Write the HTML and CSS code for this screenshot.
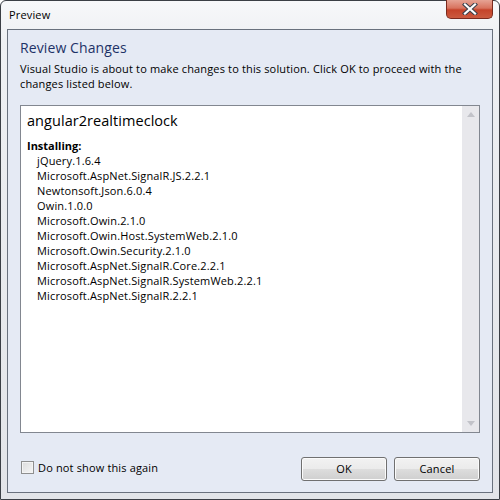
FILE: index.html
```html
<!DOCTYPE html>
<html>
<head>
<meta charset="utf-8">
<link rel="stylesheet" href="styles.css">
</head>
<body>
<div class="window">
  <div class="titlebar">
    <span class="title">Preview</span>
    <div class="close">
      <svg width="20" height="12" viewBox="0 0 20 12">
        <path d="M5 1.5 L15 10.5 M15 1.5 L5 10.5" stroke="#3a3f4a" stroke-width="4.2" stroke-linecap="square"/>
        <path d="M5 1.5 L15 10.5 M15 1.5 L5 10.5" stroke="#ffffff" stroke-width="2.2" stroke-linecap="square"/>
      </svg>
    </div>
  </div>
  <div class="client">
    <div class="heading">Review Changes</div>
    <div class="desc">Visual Studio is about to make changes to this solution. Click OK to proceed with the changes listed below.</div>
    <div class="box">
      <div class="box-content">
        <div class="project">angular2realtimeclock</div>
        <div class="section">Installing:</div>
        <ul class="packages">
          <li>jQuery.1.6.4</li>
          <li>Microsoft.AspNet.SignalR.JS.2.2.1</li>
          <li>Newtonsoft.Json.6.0.4</li>
          <li>Owin.1.0.0</li>
          <li>Microsoft.Owin.2.1.0</li>
          <li>Microsoft.Owin.Host.SystemWeb.2.1.0</li>
          <li>Microsoft.Owin.Security.2.1.0</li>
          <li>Microsoft.AspNet.SignalR.Core.2.2.1</li>
          <li>Microsoft.AspNet.SignalR.SystemWeb.2.2.1</li>
          <li>Microsoft.AspNet.SignalR.2.2.1</li>
        </ul>
      </div>
      <div class="scrollbar">
        <span class="arrow up"></span>
        <span class="arrow down"></span>
      </div>
    </div>
    <div class="footer">
      <label class="check"><span class="checkbox"></span>Do not show this again</label>
      <div class="buttons">
        <div class="btn">OK</div>
        <div class="btn">Cancel</div>
      </div>
    </div>
  </div>
</div>
</body>
</html>
```
FILE: styles.css
```css
html, body {
  margin: 0;
  padding: 0;
  width: 500px;
  height: 500px;
  overflow: hidden;
}
body {
  font-family: "Open Sans", "Noto Sans", sans-serif;
  font-size: 11px;
  letter-spacing: 0.15px;
  color: #000;
}
.window {
  box-sizing: border-box;
  width: 500px;
  height: 500px;
  border: 1px solid #3b3f45;
  border-radius: 6px 6px 0 0;
  background: linear-gradient(to bottom, #f7f8fa 0px, #eef0f3 40px, #e2e4e8 100%);
  display: flex;
  flex-direction: column;
}
.titlebar {
  height: 28px;
  display: flex;
  justify-content: space-between;
  align-items: flex-start;
}
.title {
  margin: 5px 0 0 8px;
  line-height: 18px;
  color: #000;
}
.close {
  width: 45px;
  height: 18px;
  margin-right: 6px;
  margin-top: -1px;
  border: 1px solid #7a2a1e;
  border-top: none;
  border-radius: 0 0 5px 5px;
  background: linear-gradient(to bottom, #e6a394 0%, #d8735e 45%, #c5432a 55%, #cb5a3f 100%);
  display: flex;
  align-items: center;
  justify-content: center;
}
.close svg { display: block; }
.client {
  flex: 1;
  margin: 0 6px 6px 6px;
  border: 1px solid #69717d;
  background: #e5eaf4;
  padding: 0 12px 11px 12px;
  display: flex;
  flex-direction: column;
}
.heading {
  font-size: 14px;
  letter-spacing: 0.1px;
  line-height: 20px;
  margin-top: 8px;
  color: #1e3267;
}
.desc {
  margin-top: 3px;
  line-height: 15px;
  color: #000;
}
.box {
  margin-top: 14px;
  height: 328px;
  box-sizing: border-box;
  border: 1px solid #828790;
  background: #fff;
  display: flex;
}
.box-content {
  flex: 1;
  padding: 4px 6px;
}
.project {
  font-size: 14.5px;
  letter-spacing: 0.05px;
  line-height: 22px;
  color: #000;
}
.section {
  margin-top: 6px;
  font-weight: bold;
  letter-spacing: 0;
  line-height: 15px;
}
.packages {
  list-style: none;
  margin: 0;
  padding: 0 0 0 10px;
}
.packages li {
  line-height: 15px;
}
.scrollbar {
  width: 17px;
  background: #e8e8ec;
  display: flex;
  flex-direction: column;
  justify-content: space-between;
  align-items: center;
  padding: 6px 0 6px 0;
}
.arrow {
  width: 0;
  height: 0;
  border-left: 4.5px solid transparent;
  border-right: 4.5px solid transparent;
}
.arrow.up { border-bottom: 5px solid #c2c3c9; }
.arrow.down { border-top: 5px solid #c2c3c9; }
.footer {
  margin-top: 24px;
  display: flex;
  justify-content: space-between;
  align-items: center;
}
.check {
  display: flex;
  align-items: center;
  gap: 4px;
  margin-left: 1px;
  margin-bottom: 3px;
}
.checkbox {
  width: 11px;
  height: 11px;
  border: 1px solid #8f8f8f;
  background: linear-gradient(135deg, #dcdcdc, #f6f6f6);
  box-shadow: inset 0 0 0 1px #f4f4f4;
}
.buttons {
  display: flex;
  gap: 7px;
}
.btn {
  box-sizing: border-box;
  width: 86px;
  height: 24px;
  border: 1px solid #707070;
  border-radius: 3px;
  background: linear-gradient(to bottom, #f2f2f2 0%, #ebebeb 49%, #dddddd 51%, #cfcfcf 100%);
  box-shadow: inset 0 0 0 1px #fbfbfb;
  text-align: center;
  line-height: 22px;
}
```
